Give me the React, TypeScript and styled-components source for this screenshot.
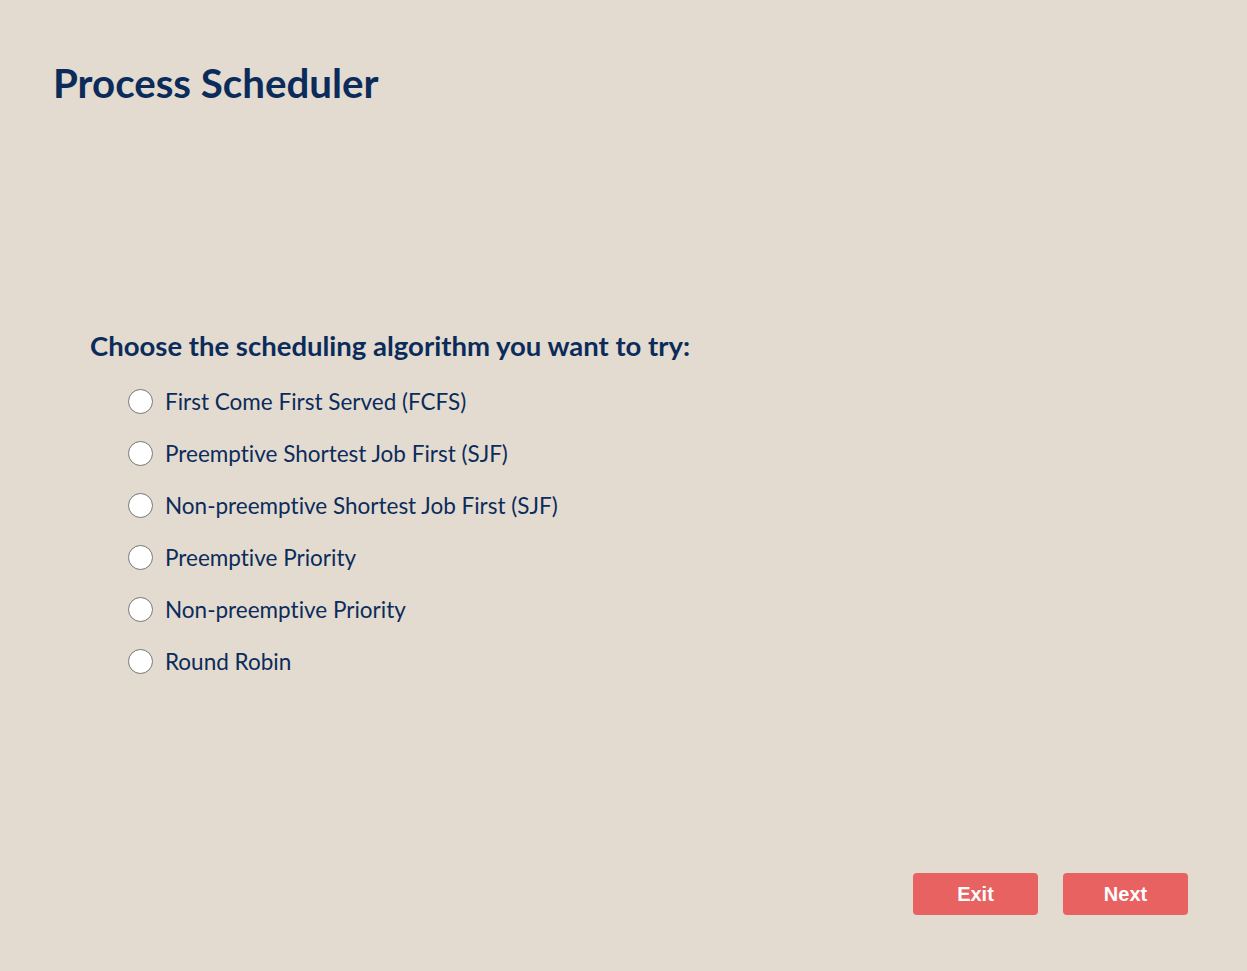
import React, { useState } from "react";
import styled, { createGlobalStyle } from "styled-components";

const Global = createGlobalStyle`
  html, body { margin: 0; padding: 0; background: #e3dbcf; }
  body { font-family: Lato, "Open Sans", sans-serif; font-variant-ligatures: none; }
`;

const Page = styled.div`
  width: 1247px;
  height: 971px;
  box-sizing: border-box;
  display: flex;
  flex-direction: column;
  padding: 58px 59px 56px 53px;
  background: #e3dbcf;
  color: #0b2b5b;
`;

const Title = styled.h1`
  margin: 0;
  font-family: Lato, sans-serif;
  font-weight: 700;
  font-size: 40.25px;
  line-height: 50px;
  color: #0b2b5b;
`;

const Section = styled.section`
  margin-top: 221px;
  padding-left: 37px;
  display: flex;
  flex-direction: column;
`;

const Question = styled.h2`
  margin: 0 0 21px;
  font-family: Lato, sans-serif;
  font-weight: 700;
  font-size: 27.5px;
  line-height: 34px;
  color: #0b2b5b;
`;

const Options = styled.div`
  display: flex;
  flex-direction: column;
  gap: 18px;
  padding-left: 38px;
`;

const Option = styled.label`
  display: flex;
  align-items: center;
  gap: 12px;
  height: 34px;
  font-family: Lato, sans-serif;
  font-size: 22.5px;
  font-variant-ligatures: none;
  color: #0b2b5b;
  cursor: pointer;
`;

const Radio = styled.span<{ $checked: boolean }>`
  width: 25px;
  height: 25px;
  box-sizing: border-box;
  border-radius: 50%;
  border: 1.5px solid #767676;
  background: #fff;
  flex: none;
  display: flex;
  align-items: center;
  justify-content: center;
  &::after {
    content: "";
    width: 13px;
    height: 13px;
    border-radius: 50%;
    background: ${(p) => (p.$checked ? "#0b2b5b" : "transparent")};
  }
`;

const Spacer = styled.div`
  flex: 1;
`;

const Footer = styled.div`
  display: flex;
  justify-content: flex-end;
  gap: 25px;
`;

const Button = styled.button`
  width: 125px;
  height: 42px;
  border: none;
  border-radius: 4px;
  background: #e86262;
  color: #fff;
  font-family: "Liberation Sans", Arial, sans-serif;
  font-weight: 700;
  font-size: 20px;
  cursor: pointer;
`;

const algorithms = [
  "First Come First Served (FCFS)",
  "Preemptive Shortest Job First (SJF)",
  "Non-preemptive Shortest Job First (SJF)",
  "Preemptive Priority",
  "Non-preemptive Priority",
  "Round Robin",
];

export default function App() {
  const [sel, setSel] = useState<number | null>(null);
  return (
    <>
      <Global />
      <Page>
        <Title>Process Scheduler</Title>
        <Section>
          <Question>Choose the scheduling algorithm you want to try:</Question>
          <Options>
            {algorithms.map((a, i) => (
              <Option key={a} onClick={() => setSel(i)}>
                <Radio $checked={sel === i} />
                {a}
              </Option>
            ))}
          </Options>
        </Section>
        <Spacer />
        <Footer>
          <Button>Exit</Button>
          <Button>Next</Button>
        </Footer>
      </Page>
    </>
  );
}
